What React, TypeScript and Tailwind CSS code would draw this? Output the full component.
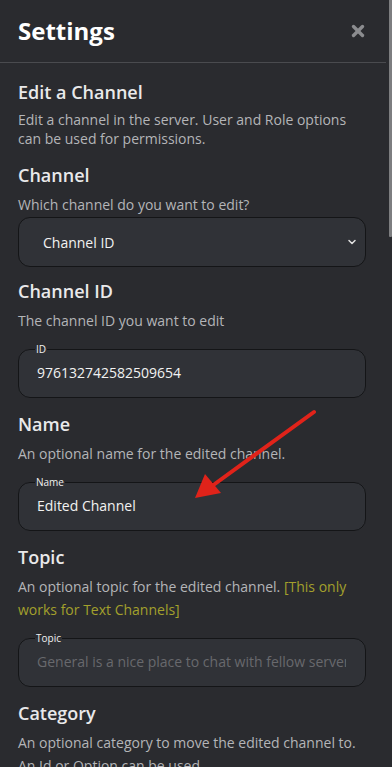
import { X, ChevronDown } from "lucide-react";

function Heading({ children }: { children: React.ReactNode }) {
  return <h3 className="text-[18px] leading-[24px] font-semibold text-[#e9e9ea]">{children}</h3>;
}

function Desc({ children, className = "" }: { children: React.ReactNode; className?: string }) {
  return <p className={"mt-[6px] text-[14px] leading-[23px] text-[#b4b5b8] " + className}>{children}</p>;
}

function Field({ label, value, placeholder }: { label: string; value?: string; placeholder?: string }) {
  return (
    <fieldset className="mt-[11px] h-[55px] rounded-[12px] border border-[#141517] bg-[#303237] pl-[18px] pr-[19px]">
      <legend className="ml-[-2px] px-[1px] text-[10px] leading-[12px] text-[#f0f0f0]">{label}</legend>
      <input
        className="mt-[8px] w-full bg-transparent text-[14px] leading-[20px] text-[#f2f2f2] outline-none placeholder:text-[#68696d]"
        defaultValue={value}
        placeholder={placeholder}
      />
    </fieldset>
  );
}

export default function App() {
  return (
    <div className="relative flex h-[767px] w-full overflow-hidden bg-[#2a2b2f]" style={{ fontFamily: '"Open Sans", sans-serif' }}>
      <div className="w-[386px] shrink-0">
        {/* header */}
        <div className="flex h-[63px] items-center justify-between border-b border-[#4a4b4f] pl-[18px] pr-[19px]">
          <h1 className="text-[24px] font-bold text-white">Settings</h1>
          <X size={18} strokeWidth={4.5} className="text-[#8b8c8f]" />
        </div>

        <div className="pl-[18px] pr-[20px] pt-[17px]">
          <Heading>Edit a Channel</Heading>
          <p className="mt-[6px] text-[14px] leading-[19px] text-[#b4b5b8]">
            Edit a channel in the server. User and Role options can be used for permissions.
          </p>

          <div className="mt-[15px]">
            <Heading>Channel</Heading>
            <Desc>Which channel do you want to edit?</Desc>
            <div className="mt-[1px] flex h-[50px] items-center justify-between rounded-[12px] border border-[#141517] bg-[#303237] pl-[24px] pr-[7px]">
              <span className="text-[14px] text-[#f2f2f2]">Channel ID</span>
              <ChevronDown size={12} strokeWidth={3} className="text-[#e0e0e0]" />
            </div>
          </div>

          <div className="mt-[12px]">
            <Heading>Channel ID</Heading>
            <Desc>The channel ID you want to edit</Desc>
            <Field label="ID" value="976132742582509654" />
          </div>

          <div className="mt-[14px]">
            <Heading>Name</Heading>
            <Desc>An optional name for the edited channel.</Desc>
            <Field label="Name" value="Edited Channel" />
          </div>

          <div className="mt-[14px]">
            <Heading>Topic</Heading>
            <Desc>
              An optional topic for the edited channel.{" "}
              <span className="text-[#a3a02c]">[This only works for Text Channels]</span>
            </Desc>
            <Field label="Topic" placeholder="General is a nice place to chat with fellow server members" />
          </div>

          <div className="mt-[14px]">
            <Heading>Category</Heading>
            <Desc>An optional category to move the edited channel to. An Id or Option can be used.</Desc>
          </div>
        </div>
      </div>

      {/* scrollbar */}
      <div className="ml-[3px] w-[3px]">
        <div className="h-[237px] rounded-b-[1px] bg-[#7d7e80]" />
      </div>

      {/* annotation arrow */}
      <svg className="pointer-events-none absolute left-0 top-0" width="392" height="767">
        <line x1="314" y1="412" x2="212" y2="486" stroke="#e0231a" strokeWidth="4" strokeLinecap="round" />
        <polygon points="195,498 205,474 221,493" fill="#e0231a" />
      </svg>
    </div>
  );
}
